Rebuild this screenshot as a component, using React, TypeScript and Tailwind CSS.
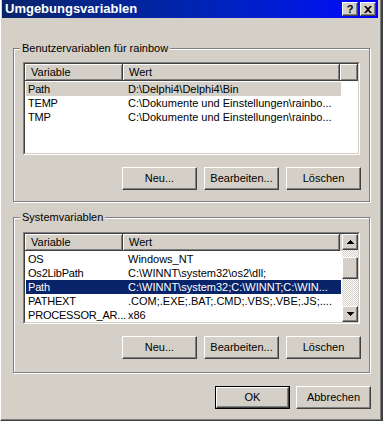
import React from 'react';

const FONT = "font-['Liberation_Sans',Arial,sans-serif]";

const raised =
  'border border-t-white border-l-white border-r-[#404040] border-b-[#404040] shadow-[inset_-1px_-1px_0_#808080]';

const Button: React.FC<{ label: string; isDefault?: boolean; className?: string }> = ({ label, isDefault, className = '' }) => (
  <div className={`h-[23px] w-[75px] bg-[#d4d0c8] ${isDefault ? 'border border-black' : ''} ${className}`}>
    <div className={`h-full w-full ${raised} flex items-center justify-center text-[11px] text-black`}>{label}</div>
  </div>
);

const GroupBox: React.FC<{ title: string; className?: string; children: React.ReactNode }> = ({ title, className = '', children }) => (
  <div className={`relative border border-[#808080] shadow-[inset_1px_1px_0_#fff,1px_1px_0_#fff] ${className}`}>
    <span className="absolute left-[6px] top-[-8px] bg-[#d4d0c8] px-[2px] text-[11px] leading-[14px] text-black">{title}</span>
    {children}
  </div>
);

type Row = { name: string; value: string };

const HeaderCell: React.FC<{ label?: string; w: string }> = ({ label, w }) => (
  <div className={`${w} h-full border-r border-b border-r-[#404040] border-b-[#404040] shadow-[inset_1px_1px_0_#fff,inset_-1px_-1px_0_#808080] pl-[6px] flex items-center text-[11px]`}>
    {label}
  </div>
);

const ListView: React.FC<{ rows: Row[]; selected: number; active?: boolean; scroll?: boolean; className?: string }> = ({ rows, selected, active, scroll, className = '' }) => (
  <div className={`border border-t-[#808080] border-l-[#808080] border-r-white border-b-white ${className}`}>
    <div className="h-full w-full border border-t-[#404040] border-l-[#404040] border-r-[#d4d0c8] border-b-[#d4d0c8] bg-white flex">
      <div className="flex-1 flex flex-col min-w-0">
        <div className="h-[17px] flex bg-[#d4d0c8]">
          <HeaderCell label="Variable" w="w-[98px]" />
          <HeaderCell label="Wert" w="w-[217px]" />
          {!scroll && <HeaderCell w="flex-1" />}
        </div>
        <div className="pt-[1px]">
          {rows.map((r, i) => {
            const sel = i === selected;
            const cls = sel ? (active ? 'bg-[#0a246a] text-white' : 'bg-[#d4d0c8] text-black') : 'text-black';
            return (
              <div key={r.name} className={`h-[14px] w-[315px] ml-[1px] flex items-center text-[11px] leading-[14px] ${cls}`}>
                <div className="w-[98px] shrink-0 pl-[2px] whitespace-nowrap tracking-[-0.2px]">{r.name}</div>
                <div className="w-[217px] pl-[4px] whitespace-nowrap overflow-hidden">{r.value}</div>
              </div>
            );
          })}
        </div>
      </div>
      {scroll && (
        <div className="w-[16px] flex flex-col bg-[repeating-conic-gradient(#fff_0_25%,#d4d0c8_0_50%)] bg-[length:2px_2px]">
          <div className={`h-[16px] bg-[#d4d0c8] ${raised} flex items-center justify-center`}>
            <svg width="7" height="4" viewBox="0 0 7 4"><path d="M3 0h1v1h1v1h1v1h1v1H0V3h1V2h1V1h1z" fill="#000" /></svg>
          </div>
          <div className="flex-1 flex flex-col pt-[7px]">
            <div className={`h-[22px] bg-[#d4d0c8] ${raised}`} />
          </div>
          <div className={`h-[16px] bg-[#d4d0c8] ${raised} flex items-center justify-center`}>
            <svg width="7" height="4" viewBox="0 0 7 4"><path d="M0 0h7v1H6v1H5v1H4v1H3V3H2V2H1V1H0z" fill="#000" /></svg>
          </div>
        </div>
      )}
    </div>
  </div>
);

const userVars: Row[] = [
  { name: 'Path', value: 'D:\\Delphi4\\Delphi4\\Bin' },
  { name: 'TEMP', value: 'C:\\Dokumente und Einstellungen\\rainbo...' },
  { name: 'TMP', value: 'C:\\Dokumente und Einstellungen\\rainbo...' },
];

const sysVars: Row[] = [
  { name: 'OS', value: 'Windows_NT' },
  { name: 'Os2LibPath', value: 'C:\\WINNT\\system32\\os2\\dll;' },
  { name: 'Path', value: 'C:\\WINNT\\system32;C:\\WINNT;C:\\WIN...' },
  { name: 'PATHEXT', value: '.COM;.EXE;.BAT;.CMD;.VBS;.VBE;.JS;....' },
  { name: 'PROCESSOR_AR...', value: 'x86' },
];

const TitleButton: React.FC<{ children: React.ReactNode }> = ({ children }) => (
  <div className={`w-[16px] h-[14px] bg-[#d4d0c8] ${raised} flex items-center justify-center text-black`}>{children}</div>
);

export default function App() {
  return (
    <div className={`${FONT} w-[383px] h-[421px] bg-[#d4d0c8] border-l border-l-white border-r-2 border-r-[#404040] border-b border-b-[#404040] overflow-hidden`}>
      <div className="h-full border-r border-b border-r-[#808080] border-b-[#808080] flex flex-col">
        <div className="h-[18px] ml-[1px] mr-[2px] flex items-center bg-gradient-to-r from-[#0a246a] to-[#0000ff] pl-[3px] pr-[2px]">
          <span className="flex-1 text-white font-bold text-[13px] leading-[14px]">Umgebungsvariablen</span>
          <div className="flex gap-[2px]">
            <TitleButton><span className="font-bold text-[11px] leading-none">?</span></TitleButton>
            <TitleButton>
              <svg width="8" height="7" viewBox="0 0 8 7"><path d="M0 0h2l2 2 2-2h2L5 3.5 8 7H6L4 5 2 7H0l3-3.5z" fill="#000" /></svg>
            </TitleButton>
          </div>
        </div>
        <div className="flex-1 pl-[12px] pr-[10px] pt-[30px] flex flex-col">
          <GroupBox title="Benutzervariablen für rainbow" className="h-[154px] px-[9px] pt-[13px]">
            <ListView rows={userVars} selected={0} className="h-[93px]" />
            <div className="flex justify-end gap-[7px] mt-[12px] mr-[-1px]">
              <Button label="Neu..." />
              <Button label="Bearbeiten..." />
              <Button label="Löschen" />
            </div>
          </GroupBox>
          <GroupBox title="Systemvariablen" className="mt-[15px] h-[156px] px-[9px] pt-[14px]">
            <ListView rows={sysVars} selected={2} active scroll className="h-[92px]" />
            <div className="flex justify-end gap-[7px] mt-[12px] mr-[-1px]">
              <Button label="Neu..." />
              <Button label="Bearbeiten..." />
              <Button label="Löschen" />
            </div>
          </GroupBox>
          <div className="flex justify-end gap-[6px] mt-[13px] mr-[-1px]">
            <Button label="OK" isDefault />
            <Button label="Abbrechen" />
          </div>
        </div>
      </div>
    </div>
  );
}
